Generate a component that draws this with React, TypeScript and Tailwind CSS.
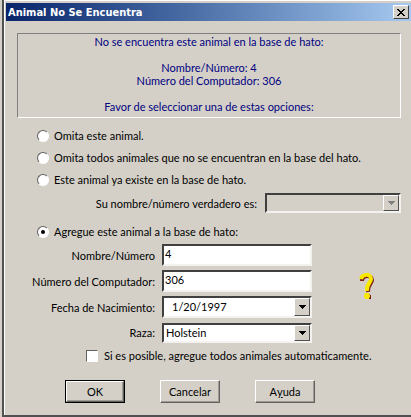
import { useState, type ReactNode, type SelectHTMLAttributes } from 'react'

const field =
  'w-full border-2 border-t-[#404040] border-l-[#404040] border-r-[#f4f2ee] border-b-[#f4f2ee] outline-none rounded-none'

function Select({ children, ...props }: SelectHTMLAttributes<HTMLSelectElement>) {
  return (
    <div className="relative">
      <select
        {...props}
        className={`${field} block h-5 appearance-none bg-white pl-[2px] pr-5 leading-4 disabled:bg-[#d4d0c8] disabled:opacity-100`}
      >
        {children}
      </select>
      <DropArrow disabled={props.disabled} />
    </div>
  )
}

function DropArrow({ disabled }: { disabled?: boolean }) {
  return (
    <span className="pointer-events-none absolute inset-y-[2px] right-[2px] flex w-4 items-center justify-center border border-t-white border-l-white border-r-[#505050] border-b-[#505050] bg-[#d4d0c8]">
      <svg width="7" height="4" viewBox="0 0 7 4" fill={disabled ? '#808080' : '#000'} shapeRendering="crispEdges">
        <path d="M0 0h7v1H0zM1 1h5v1H1zM2 2h3v1H2zM3 3h1v1H3z" />
      </svg>
    </span>
  )
}

function Radio({ value, current, onChange, children }: {
  value: string
  current: string
  onChange: (v: string) => void
  children: ReactNode
}) {
  return (
    <label className="flex items-center gap-[5px]">
      <input
        type="radio"
        name="opcion"
        value={value}
        checked={current === value}
        onChange={() => onChange(value)}
        className="grid size-3 appearance-none place-items-center rounded-full border border-t-[#606060] border-l-[#606060] border-r-white border-b-white bg-white before:size-1 before:rounded-full checked:before:bg-black"
      />
      {children}
    </label>
  )
}

function Button({ primary, children }: { primary?: boolean; children: ReactNode }) {
  return (
    <button
      type="button"
      className={`h-[23px] w-[60px] ${primary ? 'border border-black' : ''}`}
    >
      <span className="flex h-full items-center justify-center border border-t-white border-l-white border-r-[#606060] border-b-[#606060] shadow-[inset_-1px_-1px_0_#a09c94]">
        {children}
      </span>
    </button>
  )
}

export default function App() {
  const [option, setOption] = useState('agregar')

  return (
    <div className="bg-[#d4d0c8] pl-[2px] font-[Lato,'Liberation_Sans',Arial,sans-serif] text-[11px] leading-[13px] text-black">
      <div className="border-b-2 border-l-2 border-[#505050]">
        <div className="border-l border-t border-white pb-3 pl-px pt-[2px]">
          {/* Title bar */}
          <header className="flex h-[18px] items-center justify-between bg-linear-to-r from-[#0a246a] to-[#a6caf0] pl-[2px] pr-[2px]">
            <h1 className="font-['DejaVu_Sans_Condensed','DejaVu_Sans',sans-serif] font-bold text-white">
              Animal No Se Encuentra
            </h1>
            <button
              type="button"
              aria-label="Cerrar"
              className="flex h-[14px] w-4 items-center justify-center border border-t-white border-l-white border-r-[#404040] border-b-[#404040] bg-[#d4d0c8]"
            >
              <svg width="8" height="7" viewBox="0 0 8 7" shapeRendering="crispEdges">
                <path d="M0 0h2v1h1v1h2V1h1V0h2v1H7v1H6v1H5v1h1v1h1v1h1v1H6V6H5V5H3v1H2v1H0V6h1V5h1V4h1V3H2V2H1V1H0z" />
              </svg>
            </button>
          </header>

          <form className="pl-[11px] pr-[10px] pt-3">
            <div className="border border-t-[#808080] border-l-[#808080] border-r-white border-b-white pb-1 pt-px text-center text-[#000080]">
              <p>No se encuentra este animal en la base de hato:</p>
              <p className="mt-[13px]">Nombre/Número: 4</p>
              <p>Número del Computador: 306</p>
              <p className="mt-[13px]">Favor de seleccionar una de estas opciones:</p>
            </div>

            {/* Options */}
            <div className="flex flex-col items-start gap-[9px] pl-5 pt-[11px]">
              <Radio value="omitir" current={option} onChange={setOption}>Omita este animal.</Radio>
              <Radio value="omitirTodos" current={option} onChange={setOption}>
                Omita todos animales que no se encuentran en la base del hato.
              </Radio>
              <Radio value="existe" current={option} onChange={setOption}>
                Este animal ya existe en la base de hato.
              </Radio>
            </div>
            <div className="flex items-center justify-end gap-2 pt-[7px]">
              <label htmlFor="verdadero">Su nombre/número verdadero es:</label>
              <div className="w-[136px]">
                <Select id="verdadero" disabled={option !== 'existe'} />
              </div>
            </div>
            <div className="flex pl-5 pt-3">
              <Radio value="agregar" current={option} onChange={setOption}>
                Agregue este animal a la base de hato:
              </Radio>
            </div>

            {/* New animal */}
            <div className="flex items-center pt-[6px]">
              <div className="grid flex-1 grid-cols-[138px_1fr] items-center gap-x-[7px] gap-y-1">
                <label htmlFor="nombre" className="text-right">Nombre/Número</label>
                <input id="nombre" defaultValue="4" className={`${field} h-[22px] bg-white pb-1 pl-px`} />
                <label htmlFor="numero" className="text-right">Número del Computador:</label>
                <input id="numero" defaultValue="306" className={`${field} h-[22px] bg-white pb-1 pl-px`} />
                <label htmlFor="fecha" className="text-right">Fecha de Nacimiento:</label>
                <div className="relative">
                  <input id="fecha" defaultValue="1/20/1997" className={`${field} block h-[22px] bg-white pb-[2px] pl-2 pr-5`} />
                  <DropArrow />
                </div>
                <label htmlFor="raza" className="text-right">Raza:</label>
                <div className="pt-px">
                  <Select id="raza">
                    <option>Holstein</option>
                  </Select>
                </div>
              </div>
              <svg className="mb-4 ml-[47px] mr-[26px] shrink-0" width="16" height="28" viewBox="0 0 16 28" fill="none">
                <g stroke="#7a1c10" strokeWidth="4">
                  <path d="M3 9C3 3 13 2 13 8c0 4-5 5-4 12" />
                  <path d="M9 22v5M7 25h5" />
                </g>
                <g stroke="#f8e800" strokeWidth="4">
                  <path d="M2 7C3 2 12 1 12 7c0 4-5 5-4 12" />
                  <path d="M8 21v6" />
                </g>
                <path d="M5 24h6" stroke="#f8e800" strokeWidth="3" />
              </svg>
            </div>
            <label className="flex items-center gap-[6px] pl-[69px] pt-[6px]">
              <input
                type="checkbox"
                className="size-3 appearance-none border border-t-[#606060] border-l-[#606060] border-r-white border-b-white bg-white checked:bg-black"
              />
              Si es posible, agregue todos animales automaticamente.
            </label>

            <div className="flex gap-[35px] pl-12 pt-[18px]">
              <Button primary>OK</Button>
              <Button>Cancelar</Button>
              <Button>A<u>y</u>uda</Button>
            </div>
          </form>
        </div>
      </div>
    </div>
  )
}
